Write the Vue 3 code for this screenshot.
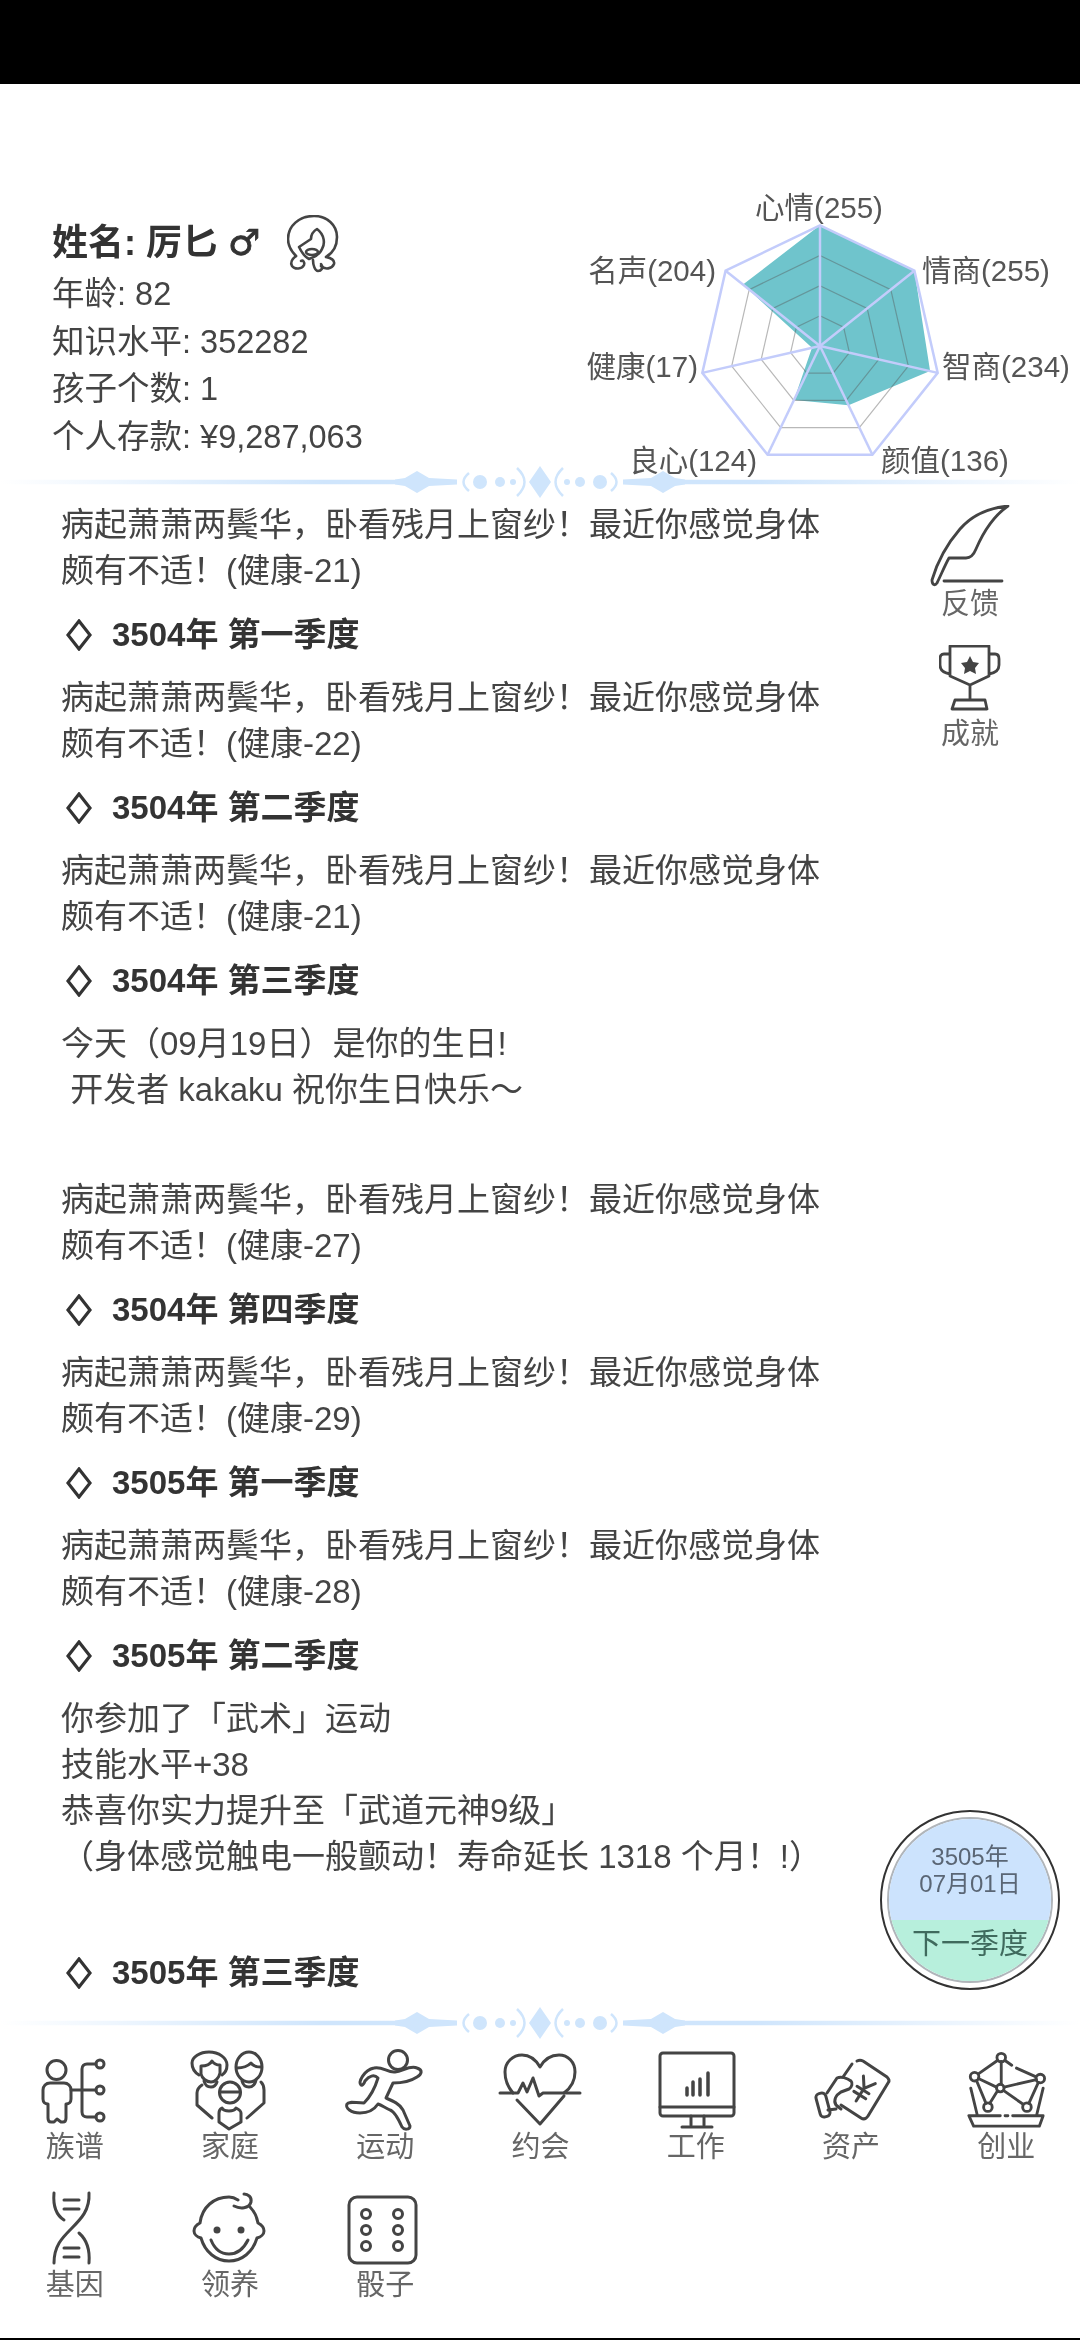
<template>
  <div class="page">
    <div class="status-bar"></div>

    <header class="profile">
      <div class="info">
        <div class="name-row">
          <span class="name">姓名: 厉匕 <span class="gender">♂</span></span>
          <svg class="avatar" viewBox="0 0 52 60" fill="none" stroke="#444" stroke-width="2.6" stroke-linecap="round" stroke-linejoin="round">
            <path d="M9 41C4 36 1 30 1 24 1 11 12 1 27 1 40 1 50 10 50 22 50 31 46 38 39 42 44 43 48 45 47 49 45 54 38 55 34 51" />
            <path d="M9 41C5 44 3 48 5 51 8 55 15 54 17 50 18 47 16 45 14 46" />
            <path d="M26 45C26 50 28 56 31 56 34 56 37 53 34 49" />
            <path d="M30 14C25 17 24 21 24 24L12 32C15 38 18 42 22 44 28 42 33 39 35 34 38 29 38 20 30 14Z" />
            <ellipse cx="25" cy="37" rx="6" ry="3" />
          </svg>
        </div>
        <div v-for="line in infoLines" :key="line" class="info-line">{{ line }}</div>
      </div>

      <svg class="radar" viewBox="0 0 500 277" width="500" height="277">
        <polygon :points="dataPoints" fill="#6fc4cc" />
        <polygon
          v-for="ring in innerRings"
          :key="ring"
          :points="ring"
          fill="none"
          stroke="#555"
          stroke-opacity="0.42"
          stroke-width="1.2"
        />
        <line
          v-for="spoke in spokes"
          :key="spoke.x + '-' + spoke.y"
          :x1="cx"
          :y1="cy"
          :x2="spoke.x"
          :y2="spoke.y"
          stroke="#c3ccfb"
          stroke-width="2.500"
        />
        <polygon :points="outerRing" fill="none" stroke="#c3ccfb" stroke-width="2.500" />
        <text
          v-for="item in stats"
          :key="item.name"
          class="radar-label"
          :x="item.x"
          :y="item.y"
          :text-anchor="item.anchor"
          dominant-baseline="central"
        >{{ item.name }}({{ item.value }})</text>
      </svg>
    </header>

    <svg class="divider" viewBox="0 0 1080 30">
      <defs>
        <linearGradient id="line-fade" x1="0" y1="0" x2="1080" y2="0" gradientUnits="userSpaceOnUse">
          <stop offset="0" stop-color="#cfe5fc" stop-opacity="0" />
          <stop offset="0.3" stop-color="#cfe5fc" />
          <stop offset="0.7" stop-color="#cfe5fc" />
          <stop offset="1" stop-color="#cfe5fc" stop-opacity="0" />
        </linearGradient>
      </defs>
      <path d="M0 12.800H400V17.200H0ZM680 12.800H1080V17.200H680Z" fill="url(#line-fade)" />
      <g fill="#cfe5fc">
        <path d="M395 12.500 405 11 417 4 429 11 457 12.500V17.500L429 19 417 26 405 19 395 17.500Z" />
        <path d="M623 12.500 651 11 663 4 675 11 685 12.500V17.500L675 19 663 26 651 19 623 17.500Z" />
        <path d="M540-1 551 15 540 31 529 15Z" />
        <circle cx="480" cy="15" r="7" /><circle cx="500" cy="15" r="5" /><circle cx="513" cy="15" r="3" />
        <circle cx="600" cy="15" r="7" /><circle cx="580" cy="15" r="5" /><circle cx="567" cy="15" r="3" />
      </g>
      <path d="M469 6Q458 15 469 24M517 1Q532 15 517 29M563 1Q548 15 563 29M611 6Q622 15 611 24" fill="none" stroke="#cfe5fc" stroke-width="2.5" />
    </svg>

    <main class="log">
      <template v-for="(item, index) in logItems" :key="index">
        <div v-if="item.season" class="season">
          <svg class="season-mark" viewBox="0 0 26 32" fill="none" stroke="#333" stroke-width="3.200">
            <path d="M13 2 24 16 13 30 2 16Z" />
          </svg>
          <span>{{ item.season }}</span>
        </div>
        <p v-else class="entry" :class="{ tail: item.tail }">{{ item.text }}</p>
      </template>
    </main>

    <aside class="side">
      <div class="side-btn">
        <svg class="feather" viewBox="0 0 80 82" fill="none" stroke="#444" stroke-width="2.800" stroke-linecap="round" stroke-linejoin="round">
          <path d="M78 1C58 3 42 10 30 24 17 39 7 58 2 75 2 80 5 81 7 78 11 70 15 60 19 53H36C41 53 44 49 46 44 52 30 62 12 78 1Z" />
          <path d="M14 76H72" />
        </svg>
        <span>反馈</span>
      </div>
      <div class="side-btn trophy-btn">
        <svg class="trophy" viewBox="0 0 62 66" fill="none" stroke="#444" stroke-width="2.800" stroke-linecap="round" stroke-linejoin="round">
          <path d="M11 1H50V31L31 40 11 31ZM11 9H5C2 9 1 11 1 14V20C1 25 5 28 11 29M50 9H56C59 9 60 11 60 14V20C60 25 56 28 50 29M31 40V55M16 55H46L48 64H13Z" />
          <path d="M31 11 34 17 40 18 36 23 37 29 31 26 25 29 26 23 22 18 28 17Z" fill="#444" stroke="none" />
        </svg>
        <span>成就</span>
      </div>
    </aside>

    <div class="next-btn">
      <div class="next-inner">
        <div class="next-date">3505年<br />07月01日</div>
        <div class="next-label">下一季度</div>
      </div>
    </div>

    <svg class="divider" viewBox="0 0 1080 30">
      <path d="M0 12.800H400V17.200H0ZM680 12.800H1080V17.200H680Z" fill="url(#line-fade)" />
      <g fill="#cfe5fc">
        <path d="M395 12.500 405 11 417 4 429 11 457 12.500V17.500L429 19 417 26 405 19 395 17.500Z" />
        <path d="M623 12.500 651 11 663 4 675 11 685 12.500V17.500L675 19 663 26 651 19 623 17.500Z" />
        <path d="M540-1 551 15 540 31 529 15Z" />
        <circle cx="480" cy="15" r="7" /><circle cx="500" cy="15" r="5" /><circle cx="513" cy="15" r="3" />
        <circle cx="600" cy="15" r="7" /><circle cx="580" cy="15" r="5" /><circle cx="567" cy="15" r="3" />
      </g>
      <path d="M469 6Q458 15 469 24M517 1Q532 15 517 29M563 1Q548 15 563 29M611 6Q622 15 611 24" fill="none" stroke="#cfe5fc" stroke-width="2.5" />
    </svg>

    <nav class="nav">
      <div class="nav-item">
        <svg class="nav-icon" viewBox="0 0 80 80">
          <circle cx="21.500" cy="20" r="9.500" />
          <path d="M15 33H29C33 33 36 36 36 40V49C36 52 34 54 31 54V68C31 70 30 72 28 72H26L22 69 19 72H16C14 72 13 70 13 68V54C10 54 8 52 8 49V40C8 36 11 33 15 33Z" />
          <path d="M36 40H61M61 14H52C49 14 47 16 47 19V62C47 65 49 67 52 67H61" />
          <circle cx="65" cy="14" r="4" /><circle cx="65" cy="40" r="4" /><circle cx="65" cy="67" r="4" />
        </svg>
        <span>族谱</span>
      </div>
      <div class="nav-item">
        <svg class="nav-icon" viewBox="0 0 80 80">
          <path d="M9 25C4 22 2 18 2 13 2 7 10 2 19 2 29 2 37 8 37 15 37 20 35 23 32 25" />
          <path d="M11 24V16C15 16 20 15 22 11 24 14 27 15 30 15V23C29 28 25 32 21 32 16 32 12 28 11 24Z" />
          <path d="M14 31C15 35 18 37 21 37S26 35 27 32" />
          <ellipse cx="59" cy="17" rx="13" ry="15" />
          <path d="M47 18C52 18 58 16 61 13 63 16 67 17 71 17" />
          <path d="M52 31C53 35 56 37 59 37S65 35 66 30" />
          <circle cx="40" cy="42.500" r="10.500" />
          <path d="M30 42H50" />
          <path d="M32 58C30 59 29 61 29 63V72L39 79 51 72V63C51 61 48 59 46 58 44 62 34 62 32 58Z" />
          <path d="M12 35C9 37 7 40 7 43V55L22 68M71 32C73 34 74 37 74 40V53L57 68" />
        </svg>
        <span>家庭</span>
      </div>
      <div class="nav-item">
        <svg class="nav-icon" viewBox="0 0 80 80">
          <circle cx="53" cy="10" r="9.500" />
          <path d="M16 35C13 32 19 20 29 18 37 16 43 23 50 22 58 21 65 15 72 18 78 20 77 24 72 27 66 31 60 33 48 33L41 48C48 51 55 54 58 60L65 76C65 80 59 80 57 77 53 68 49 61 45 60 39 57 36 55 33 54 29 60 24 63 15 63 6 63 0 58 2 54 4 51 10 53 19 53 24 48 30 38 33 28 29 24 24 26 20 31 19 34 17 36 16 35Z" />
        </svg>
        <span>运动</span>
      </div>
      <div class="nav-item">
        <svg class="nav-icon" viewBox="0 0 80 80">
          <path d="M13 43C7 36 5 28 5 22 5 12 13 5 22 5 30 5 36 10 40 17 44 10 50 5 59 5 68 5 75 12 75 22 75 29 72 37 64 43" />
          <path d="M17 50 40 74 64 46" />
          <path d="M0 43H18L23 33 27 42 33 28 39 46 43 43H80" />
        </svg>
        <span>约会</span>
      </div>
      <div class="nav-item">
        <svg class="nav-icon" viewBox="0 0 80 80">
          <rect x="4" y="3" width="74" height="63" rx="3" />
          <path d="M4 57H78M35 66V75M48 66V75M26 77H56" />
          <path d="M31 45V38M37 45V32M44 45V29M52 45V23" stroke-width="3.500" />
        </svg>
        <span>工作</span>
      </div>
      <div class="nav-item">
        <svg class="nav-icon" viewBox="0 0 80 80">
          <path d="M46 11C48 10 50 10 52 11L76 27C78 29 79 31 77 33L57 66C55 69 53 70 50 68L30 55" />
          <path d="M41 14 32 27M16 43 26 28C30 26 36 28 40 31 42 33 41 37 38 39L30 42C25 45 22 50 25 55L30 59M17 60 25 59" />
          <g transform="rotate(32 52 40)">
            <path d="M45 28 52 38 59 28M52 38V53M45 40H59M45 46H59" />
          </g>
          <rect x="7" y="43" width="10" height="24" rx="4" transform="rotate(-15 12 55)" />
        </svg>
        <span>资产</span>
      </div>
      <div class="nav-item">
        <svg class="nav-icon" viewBox="0 0 84 80">
          <circle cx="37" cy="6" r="4.500" /><circle cx="9" cy="26" r="4.500" /><circle cx="78" cy="28" r="4.500" />
          <circle cx="36" cy="38" r="4" /><circle cx="23" cy="58" r="4.500" /><circle cx="64" cy="58" r="4.500" />
          <path d="M33 9 13 23M37 10V34M13 28 32 37M40 37 74 29M11 30 21 54M33 41 25 54M40 41 60 55M76 32 66 54M41 9 48 14M53 17 73 26" />
          <path d="M5 38 12 67M81 38 74 67M3 67H36M41 67H44M49 67H81L77 78H8L3 67" />
        </svg>
        <span>创业</span>
      </div>
      <div class="nav-item">
        <svg class="nav-icon" viewBox="0 0 80 80">
          <path d="M19 5C18 17 21 27 29 32M54 5C55 22 46 31 36 41 27 50 19 58 19 75M54 75C55 63 52 52 44 45M29 12H44M29 21H44M29 60H44M29 69H44" />
        </svg>
        <span>基因</span>
      </div>
      <div class="nav-item">
        <svg class="nav-icon" viewBox="0 0 80 80">
          <path d="M48 12C45 10 43 9 39 9 24 9 12 19 10 35 6 37 4 40 4 43 4 46 7 49 11 50 15 64 26 73 39 73S63 64 67 50C71 49 74 46 74 43 74 40 72 37 68 35 67 29 64 23 60 19" />
          <path d="M44 18C50 21 59 21 61 14 62 9 58 6 54 6" />
          <path d="M21 52C25 62 32 66 39 66S53 62 58 52" />
          <circle cx="27" cy="42" r="3.500" class="solid" /><circle cx="51" cy="42" r="3.500" class="solid" />
        </svg>
        <span>领养</span>
      </div>
      <div class="nav-item">
        <svg class="nav-icon" viewBox="0 0 80 80">
          <rect x="4" y="9" width="67" height="66" rx="8" />
          <circle cx="21" cy="26" r="4.500" /><circle cx="21" cy="42" r="4.500" /><circle cx="21" cy="58" r="4.500" />
          <circle cx="53" cy="26" r="4.500" /><circle cx="53" cy="42" r="4.500" /><circle cx="53" cy="58" r="4.500" />
        </svg>
        <span>骰子</span>
      </div>
    </nav>

    <div class="bottom-line"></div>
  </div>
</template>

<script setup>
const cx = 240
const cy = 156
const radius = 120.7
const maxValue = 250

const infoLines = ['年龄: 82', '知识水平: 352282', '孩子个数: 1', '个人存款: ¥9,287,063']

const stats = [
  { name: '心情', value: 255, x: 239, y: 17, anchor: 'middle' },
  { name: '情商', value: 255, x: 342, y: 80, anchor: 'start' },
  { name: '智商', value: 234, x: 362, y: 176, anchor: 'start' },
  { name: '颜值', value: 136, x: 301, y: 270, anchor: 'start' },
  { name: '良心', value: 124, x: 177, y: 270, anchor: 'end' },
  { name: '健康', value: 17, x: 118, y: 176, anchor: 'end' },
  { name: '名声', value: 204, x: 136, y: 80, anchor: 'end' }
]

// 第 i 条轴上，比例 ratio 处的坐标
function pointAt(i, ratio) {
  const angle = (i * 2 * Math.PI) / stats.length
  return {
    x: +(cx + Math.sin(angle) * radius * ratio).toFixed(1),
    y: +(cy - Math.cos(angle) * radius * ratio).toFixed(1)
  }
}

function ringPoints(ratio) {
  return stats
    .map((_, i) => {
      const p = pointAt(i, ratio)
      return `${p.x},${p.y}`
    })
    .join(' ')
}

const innerRings = [0.25, 0.5, 0.75].map(ringPoints)
const outerRing = ringPoints(1)
const spokes = stats.map((_, i) => pointAt(i, 1))
const dataPoints = stats
  .map((s, i) => {
    const p = pointAt(i, Math.min(s.value / maxValue, 1))
    return `${p.x},${p.y}`
  })
  .join(' ')

const sick = (n) => `病起萧萧两鬓华，卧看残月上窗纱！最近你感觉身体颇有不适！(健康-${n})`

const logItems = [
  { text: sick(21) },
  { season: '3504年 第一季度' },
  { text: sick(22) },
  { season: '3504年 第二季度' },
  { text: sick(21) },
  { season: '3504年 第三季度' },
  { text: '今天（09月19日）是你的生日!\n 开发者 kakaku 祝你生日快乐～\n\n', tail: true },
  { text: sick(27) },
  { season: '3504年 第四季度' },
  { text: sick(29) },
  { season: '3505年 第一季度' },
  { text: sick(28) },
  { season: '3505年 第二季度' },
  { text: '你参加了「武术」运动\n技能水平+38\n恭喜你实力提升至「武道元神9级」\n（身体感觉触电一般颤动！寿命延长 1318 个月！!）\n\n', tail: true },
  { season: '3505年 第三季度' }
]
</script>

<style scoped>
.page {
  position: relative;
  width: 1080px;
  height: 2340px;
  display: flex;
  flex-direction: column;
  overflow: hidden;
  background: #fff;
  color: #444;
  font-family: "Liberation Sans", "Noto Sans CJK SC", sans-serif;
  filter: blur(0.6px);
}

.status-bar {
  height: 84px;
  flex: none;
  background: #000;
}

.profile {
  display: flex;
  flex: none;
  height: 383px;
  padding-top: 106px;
  padding-left: 52px;
  box-sizing: border-box;
}

.info {
  width: 528px;
  flex: none;
  padding-top: 25px;
  font-size: 32.500px;
  line-height: 47.500px;
}

.name-row {
  display: flex;
  align-items: center;
  height: 56px;
}

.name {
  font-size: 36px;
  font-weight: 700;
  color: #333;
}

.gender {
  font-family: "DejaVu Sans", sans-serif;
  -webkit-text-stroke: 0.8px #333;
}

.avatar {
  width: 52px;
  height: 60px;
  margin-left: 27px;
  margin-top: 4px;
}

.radar {
  flex: none;
  overflow: visible;
}

.radar-label {
  font-size: 29.500px;
  fill: #555;
}

.divider {
  display: block;
  flex: none;
  width: 1080px;
  height: 30px;
  overflow: visible;
}

.log {
  flex: 1;
  min-height: 0;
  overflow: hidden;
  padding: 5px 0 0 61px;
  width: 780px;
  font-size: 33px;
  line-height: 46px;
}

.entry {
  margin: 0;
  white-space: pre-wrap;
}

.entry.tail {
  padding-bottom: 6px;
}

.entry + .entry {
  margin-top: 12px;
}

.season {
  display: flex;
  align-items: center;
  height: 46px;
  margin: 17.500px 0;
  font-weight: 700;
  color: #333;
}

.season-mark {
  width: 26px;
  height: 32px;
  margin-left: 5px;
  margin-right: 20px;
}

.side {
  position: absolute;
  left: 930px;
  top: 505px;
  width: 80px;
  display: flex;
  flex-direction: column;
  align-items: center;
  font-size: 29px;
  line-height: 34px;
  color: #666;
}

.side-btn {
  display: flex;
  flex-direction: column;
  align-items: center;
}

.feather {
  width: 80px;
  height: 82px;
}

.trophy-btn {
  margin-top: 24px;
}

.trophy {
  width: 62px;
  height: 66px;
  margin-bottom: 6px;
}

.next-btn {
  position: absolute;
  left: 880px;
  top: 1810px;
  width: 180px;
  height: 180px;
  box-sizing: border-box;
  padding: 5px;
  border: 2px solid #333;
  border-radius: 50%;
  background: #fff;
}

.next-inner {
  height: 100%;
  box-sizing: border-box;
  display: flex;
  flex-direction: column;
  overflow: hidden;
  border: 2px solid #b0b5ba;
  border-radius: 50%;
}

.next-date {
  flex: none;
  height: 101px;
  box-sizing: border-box;
  padding-top: 24px;
  text-align: center;
  font-size: 24px;
  line-height: 27px;
  background: #cce3fd;
  color: #5a6675;
}

.next-label {
  flex: 1;
  text-align: center;
  font-size: 29px;
  line-height: 48px;
  background: #b7efdc;
  color: #3f6a5d;
}

.nav {
  flex: none;
  height: 300px;
  width: 1087px;
  margin-left: -3px;
  box-sizing: border-box;
  padding-top: 12px;
  display: grid;
  grid-template-columns: repeat(7, 1fr);
  grid-auto-rows: 114px;
  row-gap: 24px;
  font-size: 29px;
  line-height: 34px;
  color: #666;
}

.nav-item {
  display: flex;
  flex-direction: column;
  align-items: center;
}

.nav-icon {
  width: 80px;
  height: 80px;
  flex: none;
  overflow: visible;
  fill: none;
  stroke: #444;
  stroke-width: 3;
  stroke-linecap: round;
  stroke-linejoin: round;
}

.nav-icon .solid {
  fill: #444;
  stroke: none;
}

.bottom-line {
  flex: none;
  height: 2px;
  background: #000;
}
</style>
